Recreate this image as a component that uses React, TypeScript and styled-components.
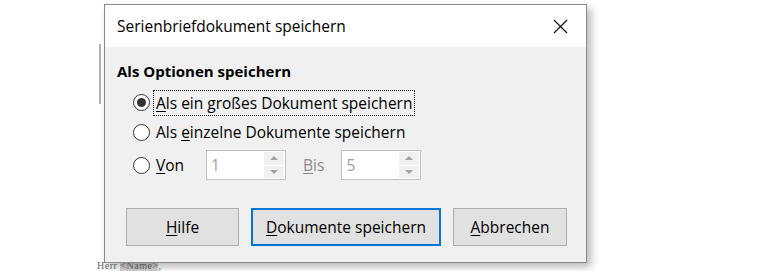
import React from 'react';
import styled, { createGlobalStyle } from 'styled-components';

const GlobalStyle = createGlobalStyle`
  html, body {
    margin: 0;
    padding: 0;
    background: #ffffff;
  }
  body {
    font-family: "Open Sans", "Noto Sans", "Liberation Sans", sans-serif;
    color: #000000;
  }
`;

// --- Styles ---
// Page behind the dialog (the word processor document)
const Desktop = styled.div`
  position: relative;
  width: 768px;
  height: 271px;
  overflow: hidden;
  background: #ffffff;
`;

// Thin ruler edge of the document peeking out at the left of the dialog
const DocStrip = styled.div`
  position: absolute;
  left: 99px;
  top: 44px;
  width: 2px;
  height: 60px;
  background: #b4b4b4;
`;

const DocLine = styled.div`
  position: absolute;
  left: 97px;
  top: 261px;
  font-family: "Liberation Serif", serif;
  font-size: 10px;
  line-height: 9px;
  color: #666;
  letter-spacing: 0.5px;
  span {
    background: #d4d4d4;
  }
`;

const Dialog = styled.div`
  position: absolute;
  left: 104px;
  top: 4px;
  width: 481px;
  height: 257px;
  border: 1px solid #8a8a8a;
  background: #f0f0f0;
  box-shadow: 4px 4px 8px rgba(0, 0, 0, 0.28);
  display: flex;
  flex-direction: column;
`;

const TitleBar = styled.div`
  height: 42px;
  background: #ffffff;
  display: flex;
  align-items: center;
  justify-content: space-between;
  padding: 0 12px 0 12px;
  font-size: 15.5px;
`;

const CloseButton = styled.div`
  width: 24px;
  height: 24px;
  display: flex;
  align-items: center;
  justify-content: center;
  margin-right: 2px;
`;

const Body = styled.div`
  flex: 1;
  display: flex;
  flex-direction: column;
  padding: 13px 0 0 12px;
`;

const Heading = styled.div`
  font-weight: 700;
  font-size: 15px;
  height: 22px;
  line-height: 22px;
`;

const Options = styled.div`
  display: flex;
  flex-direction: column;
  padding-left: 16px;
  margin-top: 6px;
`;

const OptionRow = styled.div<{ $h: number }>`
  height: ${p => p.$h}px;
  display: flex;
  align-items: center;
  font-size: 15.5px;
`;

const Radio = styled.span<{ $checked?: boolean }>`
  box-sizing: border-box;
  width: 17px;
  height: 17px;
  border-radius: 50%;
  border: 1px solid #333333;
  background: #ffffff;
  display: inline-flex;
  align-items: center;
  justify-content: center;
  margin-right: 6px;
  flex-shrink: 0;
  &::after {
    content: '';
    display: ${p => (p.$checked ? 'block' : 'none')};
    width: 9px;
    height: 9px;
    border-radius: 50%;
    background: #333333;
  }
`;

const Label = styled.span<{ $focused?: boolean; $muted?: boolean }>`
  padding: 1px 2px;
  margin-left: -2px;
  color: ${p => (p.$muted ? '#8c8c8c' : '#000')};
  outline: ${p => (p.$focused ? '1px dotted #000' : 'none')};
  u {
    text-decoration-thickness: 1px;
    text-underline-offset: 2px;
  }
`;

const SpinBox = styled.div`
  box-sizing: border-box;
  width: 80px;
  height: 30px;
  border: 1px solid #bfbfbf;
  background: #ffffff;
  display: flex;
  align-items: stretch;
`;

const SpinValue = styled.div`
  flex: 1;
  display: flex;
  align-items: center;
  padding-left: 4px;
  color: #a0a0a0;
  font-size: 15.5px;
`;

const SpinButtons = styled.div`
  width: 20px;
  margin: 1px 1px 1px 0;
  display: flex;
  flex-direction: column;
  gap: 1px;
`;

const SpinBtn = styled.div`
  flex: 1;
  background: #f0f0f0;
  display: flex;
  align-items: center;
  justify-content: center;
`;

const Arrow = styled.span<{ $down?: boolean }>`
  width: 0;
  height: 0;
  border-left: 4px solid transparent;
  border-right: 4px solid transparent;
  ${p =>
    p.$down
      ? 'border-top: 4px solid #a0a0a0;'
      : 'border-bottom: 4px solid #a0a0a0;'}
`;

const Spacer = styled.div<{ $w: number }>`
  width: ${p => p.$w}px;
  flex-shrink: 0;
`;

const ButtonRow = styled.div`
  display: flex;
  gap: 12px;
  padding-left: 9px;
  margin-top: 25px;
`;

const DialogButton = styled.div<{ $w: number; $default?: boolean }>`
  box-sizing: border-box;
  width: ${p => p.$w}px;
  height: 38px;
  background: #e1e1e1;
  border: ${p => (p.$default ? '2px solid #0078d7' : '1px solid #adadad')};
  display: flex;
  align-items: center;
  justify-content: center;
  font-size: 15.5px;
  u {
    text-decoration-thickness: 1px;
    text-underline-offset: 2px;
  }
`;
// --- End Styles ---

const Spin: React.FC<{ value: string }> = ({ value }) => (
  <SpinBox>
    <SpinValue>{value}</SpinValue>
    <SpinButtons>
      <SpinBtn>
        <Arrow />
      </SpinBtn>
      <SpinBtn>
        <Arrow $down />
      </SpinBtn>
    </SpinButtons>
  </SpinBox>
);

export default function App() {
  return (
    <>
      <GlobalStyle />
      <Desktop>
        <DocStrip />
        <DocLine>
          Herr <span>&lt;Name&gt;</span>,
        </DocLine>
        <Dialog>
          <TitleBar>
            <span>Serienbriefdokument speichern</span>
            <CloseButton>
              <svg width="15" height="15" viewBox="0 0 15 15">
                <path d="M1 1 L14 14 M14 1 L1 14" stroke="#111" strokeWidth="1.2" fill="none" />
              </svg>
            </CloseButton>
          </TitleBar>
          <Body>
            <Heading>Als Optionen speichern</Heading>
            <Options>
              <OptionRow $h={29}>
                <Radio $checked />
                <Label $focused>
                  <u>A</u>ls ein großes Dokument speichern
                </Label>
              </OptionRow>
              <OptionRow $h={30}>
                <Radio />
                <Label>
                  Als <u>e</u>inzelne Dokumente speichern
                </Label>
              </OptionRow>
              <OptionRow $h={36}>
                <Radio />
                <Label>
                  <u>V</u>on
                </Label>
                <Spacer $w={20} />
                <Spin value="1" />
                <Spacer $w={17} />
                <Label $muted>
                  <u>B</u>is
                </Label>
                <Spacer $w={15} />
                <Spin value="5" />
              </OptionRow>
            </Options>
            <ButtonRow>
              <DialogButton $w={113}>
                <span>
                  <u>H</u>ilfe
                </span>
              </DialogButton>
              <DialogButton $w={190} $default>
                <span>
                  <u>D</u>okumente speichern
                </span>
              </DialogButton>
              <DialogButton $w={114}>
                <span>
                  <u>A</u>bbrechen
                </span>
              </DialogButton>
            </ButtonRow>
          </Body>
        </Dialog>
      </Desktop>
    </>
  );
}
